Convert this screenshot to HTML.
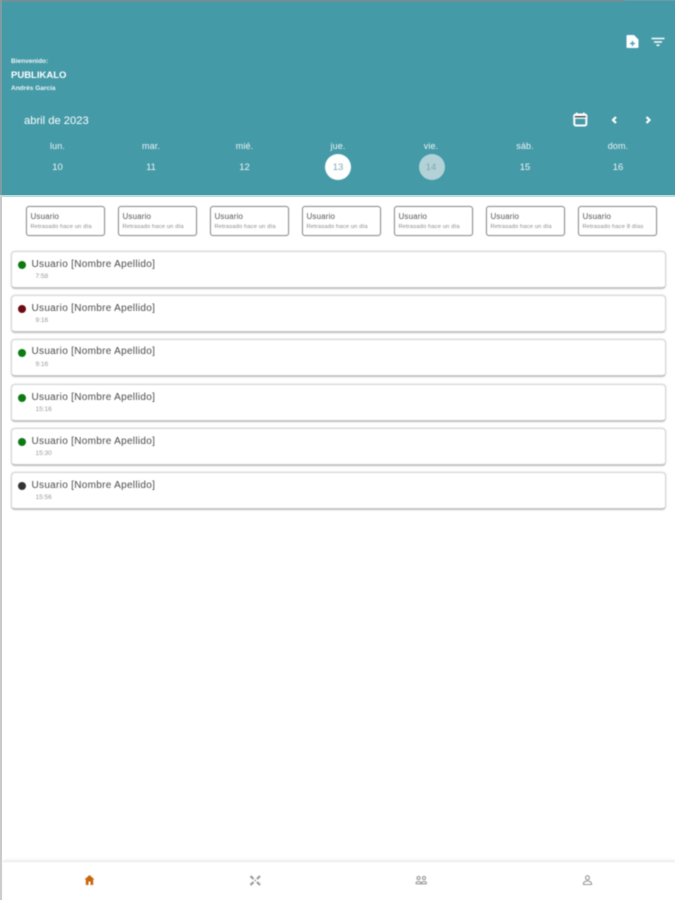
<!DOCTYPE html>
<html lang="es"><head><meta charset="utf-8"><title>Publikalo</title>
<style>
html,body{margin:0;padding:0;background:#fff}
body{width:675px;height:900px;position:relative;overflow:hidden;font-family:"Liberation Sans",sans-serif}
.a{position:absolute;white-space:nowrap}
.b{filter:blur(.55px)}
.hdr{left:0;top:0;width:675px;height:195px;background:#459aa8}
.w{color:#fff}
.c{transform:translateX(-50%);text-align:center}
.dow{top:141px;font-size:9px;color:#eef6f7;letter-spacing:.1px}
.day{top:162px;font-size:9.5px;color:#eef6f7}
.sc{width:77px;height:28px;top:206px;border:1px solid #8d8d8d;border-radius:3px;box-shadow:0 0 1px #bbb;background:#fff}
.sc .t{position:absolute;left:3.500px;top:5px;font-size:8px;color:#555;letter-spacing:.15px;white-space:nowrap}
.sc .s{position:absolute;left:3.500px;top:16.500px;font-size:5.800px;color:#888;letter-spacing:.12px;white-space:nowrap}
.card{left:11px;width:653px;height:35px;border:1px solid #d4d4d4;border-bottom:2px solid #c6c6c6;border-radius:4px;background:#fff;box-shadow:0 0 2px #ddd}
.dot{position:absolute;left:6px;top:8.500px;width:8px;height:8px;border-radius:50%}
.name{position:absolute;left:19.500px;top:6.500px;font-size:10px;color:#4a4a4a;letter-spacing:.3px;white-space:nowrap}
.tm{position:absolute;left:23.500px;top:20.500px;font-size:6.500px;color:#999;white-space:nowrap}
</style></head><body>
<div class="a hdr"></div>
<div class="a" style="left:0;top:0;width:625px;height:2px;background:#6f8f99"></div>
<div class="a" style="left:625px;top:0;width:50px;height:1px;background:#6f9aa5"></div>
<div class="a" style="left:0;top:0;width:2px;height:195px;background:#7f9ca3"></div>
<div class="a" style="left:0;top:195px;width:675px;height:2px;background:#b5dde0"></div>
<div class="a" style="left:0;top:197px;width:2px;height:703px;background:#c9c9c9"></div>

<div class="b">
<div class="a w" style="left:11px;top:57.500px;font-size:6.500px;font-weight:bold;opacity:.9">Bienvenido:</div>
<div class="a w" style="left:11px;top:70px;font-size:9.500px;font-weight:bold">PUBLIKALO</div>
<div class="a w" style="left:11px;top:84.500px;font-size:6.500px;font-weight:bold;opacity:.9">Andrés García</div>
<div class="a w" style="left:24px;top:115px;font-size:11.200px">abril de 2023</div>

<div class="a dow c" style="left:57.500px">lun.</div><div class="a dow c" style="left:151px">mar.</div><div class="a dow c" style="left:244.500px">mié.</div><div class="a dow c" style="left:338px">jue.</div><div class="a dow c" style="left:431px">vie.</div><div class="a dow c" style="left:525px">sáb.</div><div class="a dow c" style="left:618px">dom.</div>
<div class="a" style="left:325px;top:154px;width:26px;height:26px;border-radius:50%;background:#fff"></div>
<div class="a" style="left:419px;top:154px;width:26px;height:26px;border-radius:50%;background:#b3d2d8"></div>
<div class="a day c" style="left:57.500px">10</div><div class="a day c" style="left:151px">11</div><div class="a day c" style="left:244.500px">12</div><div class="a day c" style="left:338px;color:#7fa9b1">13</div><div class="a day c" style="left:431px;color:#7fa6ae">14</div><div class="a day c" style="left:525px">15</div><div class="a day c" style="left:618px">16</div>

<svg class="a" style="left:560px;top:25px" width="115" height="110" viewBox="0 0 115 110">
<path d="M67.500 10h6.500l4.500 4.500v7.500a1 1 0 0 1-1 1h-10a1 1 0 0 1-1-1V11a1 1 0 0 1 1-1z" fill="#fff"/>
<path d="M70 18.500h5M72.500 16v5" stroke="#459aa8" stroke-width="1.300"/>
<path d="M91.500 13.500h13M94 17h8M96.500 20.300h3" stroke="#fff" stroke-width="1.500" fill="none"/>
<rect x="14.300" y="89.500" width="12" height="11" rx="1.500" fill="none" stroke="#fff" stroke-width="2"/>
<path d="M14 90.500h12.500v2.500H14zM16.800 87.500v2.500M23.800 87.500v2.500" stroke="#fff" stroke-width="1.500"/>
<path d="M56 92l-3 3 3 3" stroke="#fff" stroke-width="2.200" fill="none"/>
<path d="M86.500 92l3 3-3 3" stroke="#fff" stroke-width="2.200" fill="none"/>
</svg>

<div class="a sc" style="left:26px"><div class="t">Usuario</div><div class="s">Retrasado hace un día</div></div>
<div class="a sc" style="left:118px"><div class="t">Usuario</div><div class="s">Retrasado hace un día</div></div>
<div class="a sc" style="left:210px"><div class="t">Usuario</div><div class="s">Retrasado hace un día</div></div>
<div class="a sc" style="left:302px"><div class="t">Usuario</div><div class="s">Retrasado hace un día</div></div>
<div class="a sc" style="left:394px"><div class="t">Usuario</div><div class="s">Retrasado hace un día</div></div>
<div class="a sc" style="left:486px"><div class="t">Usuario</div><div class="s">Retrasado hace un día</div></div>
<div class="a sc" style="left:578px"><div class="t">Usuario</div><div class="s">Retrasado hace 8 días</div></div>

<div class="a card" style="top:251px"><div class="dot" style="background:#0d7a12"></div><div class="name">Usuario [Nombre Apellido]</div><div class="tm">7:58</div></div>
<div class="a card" style="top:295px"><div class="dot" style="background:#6d0a14"></div><div class="name">Usuario [Nombre Apellido]</div><div class="tm">9:16</div></div>
<div class="a card" style="top:339px"><div class="dot" style="background:#0d7a12"></div><div class="name" style="top:6px">Usuario [Nombre Apellido]</div><div class="tm">9:16</div></div>
<div class="a card" style="top:384px"><div class="dot" style="background:#0d7a12"></div><div class="name">Usuario [Nombre Apellido]</div><div class="tm">15:16</div></div>
<div class="a card" style="top:428px"><div class="dot" style="background:#0d7a12"></div><div class="name">Usuario [Nombre Apellido]</div><div class="tm">15:30</div></div>
<div class="a card" style="top:472px"><div class="dot" style="background:#333"></div><div class="name">Usuario [Nombre Apellido]</div><div class="tm">15:56</div></div>

<div class="a" style="left:3px;top:861px;width:672px;height:39px;background:#fff;border-top:1px solid #e8e8e8;box-shadow:0 -1px 3px #eee"></div>
<svg class="a" style="left:0;top:865px" width="675" height="30" viewBox="0 0 675 30">
<path d="M89.500 10l-5 4.500h1.300V20h2.700v-3.500h2V20h2.700v-5.500h1.300z" fill="#c8660e"/>
<path d="M250.500 11l3 3M260 11l-3 3M250.500 20l3-3M260 20l-3-3" stroke="#999" stroke-width="2.200" fill="none"/>
<circle cx="255.200" cy="15.500" r="1" fill="#aaa"/>
<g fill="none" stroke="#999" stroke-width="1.100">
<circle cx="418.500" cy="13" r="1.600"/><circle cx="424" cy="13" r="1.600"/>
<path d="M416 18.800v-.6c0-1.300 1.500-1.700 2.500-1.700s2.500.4 2.500 1.700v.6M421.500 18.800v-.6c0-1.300 1.500-1.700 2.500-1.700s2.500.4 2.500 1.700v.6M416 18.800h10.500"/>
<circle cx="587.500" cy="12.800" r="2"/>
<path d="M583.500 19.500v-1c0-1.800 2.500-2.500 4-2.500s4 .7 4 2.500v1z"/>
</g>
</svg>
</div>
</body></html>
